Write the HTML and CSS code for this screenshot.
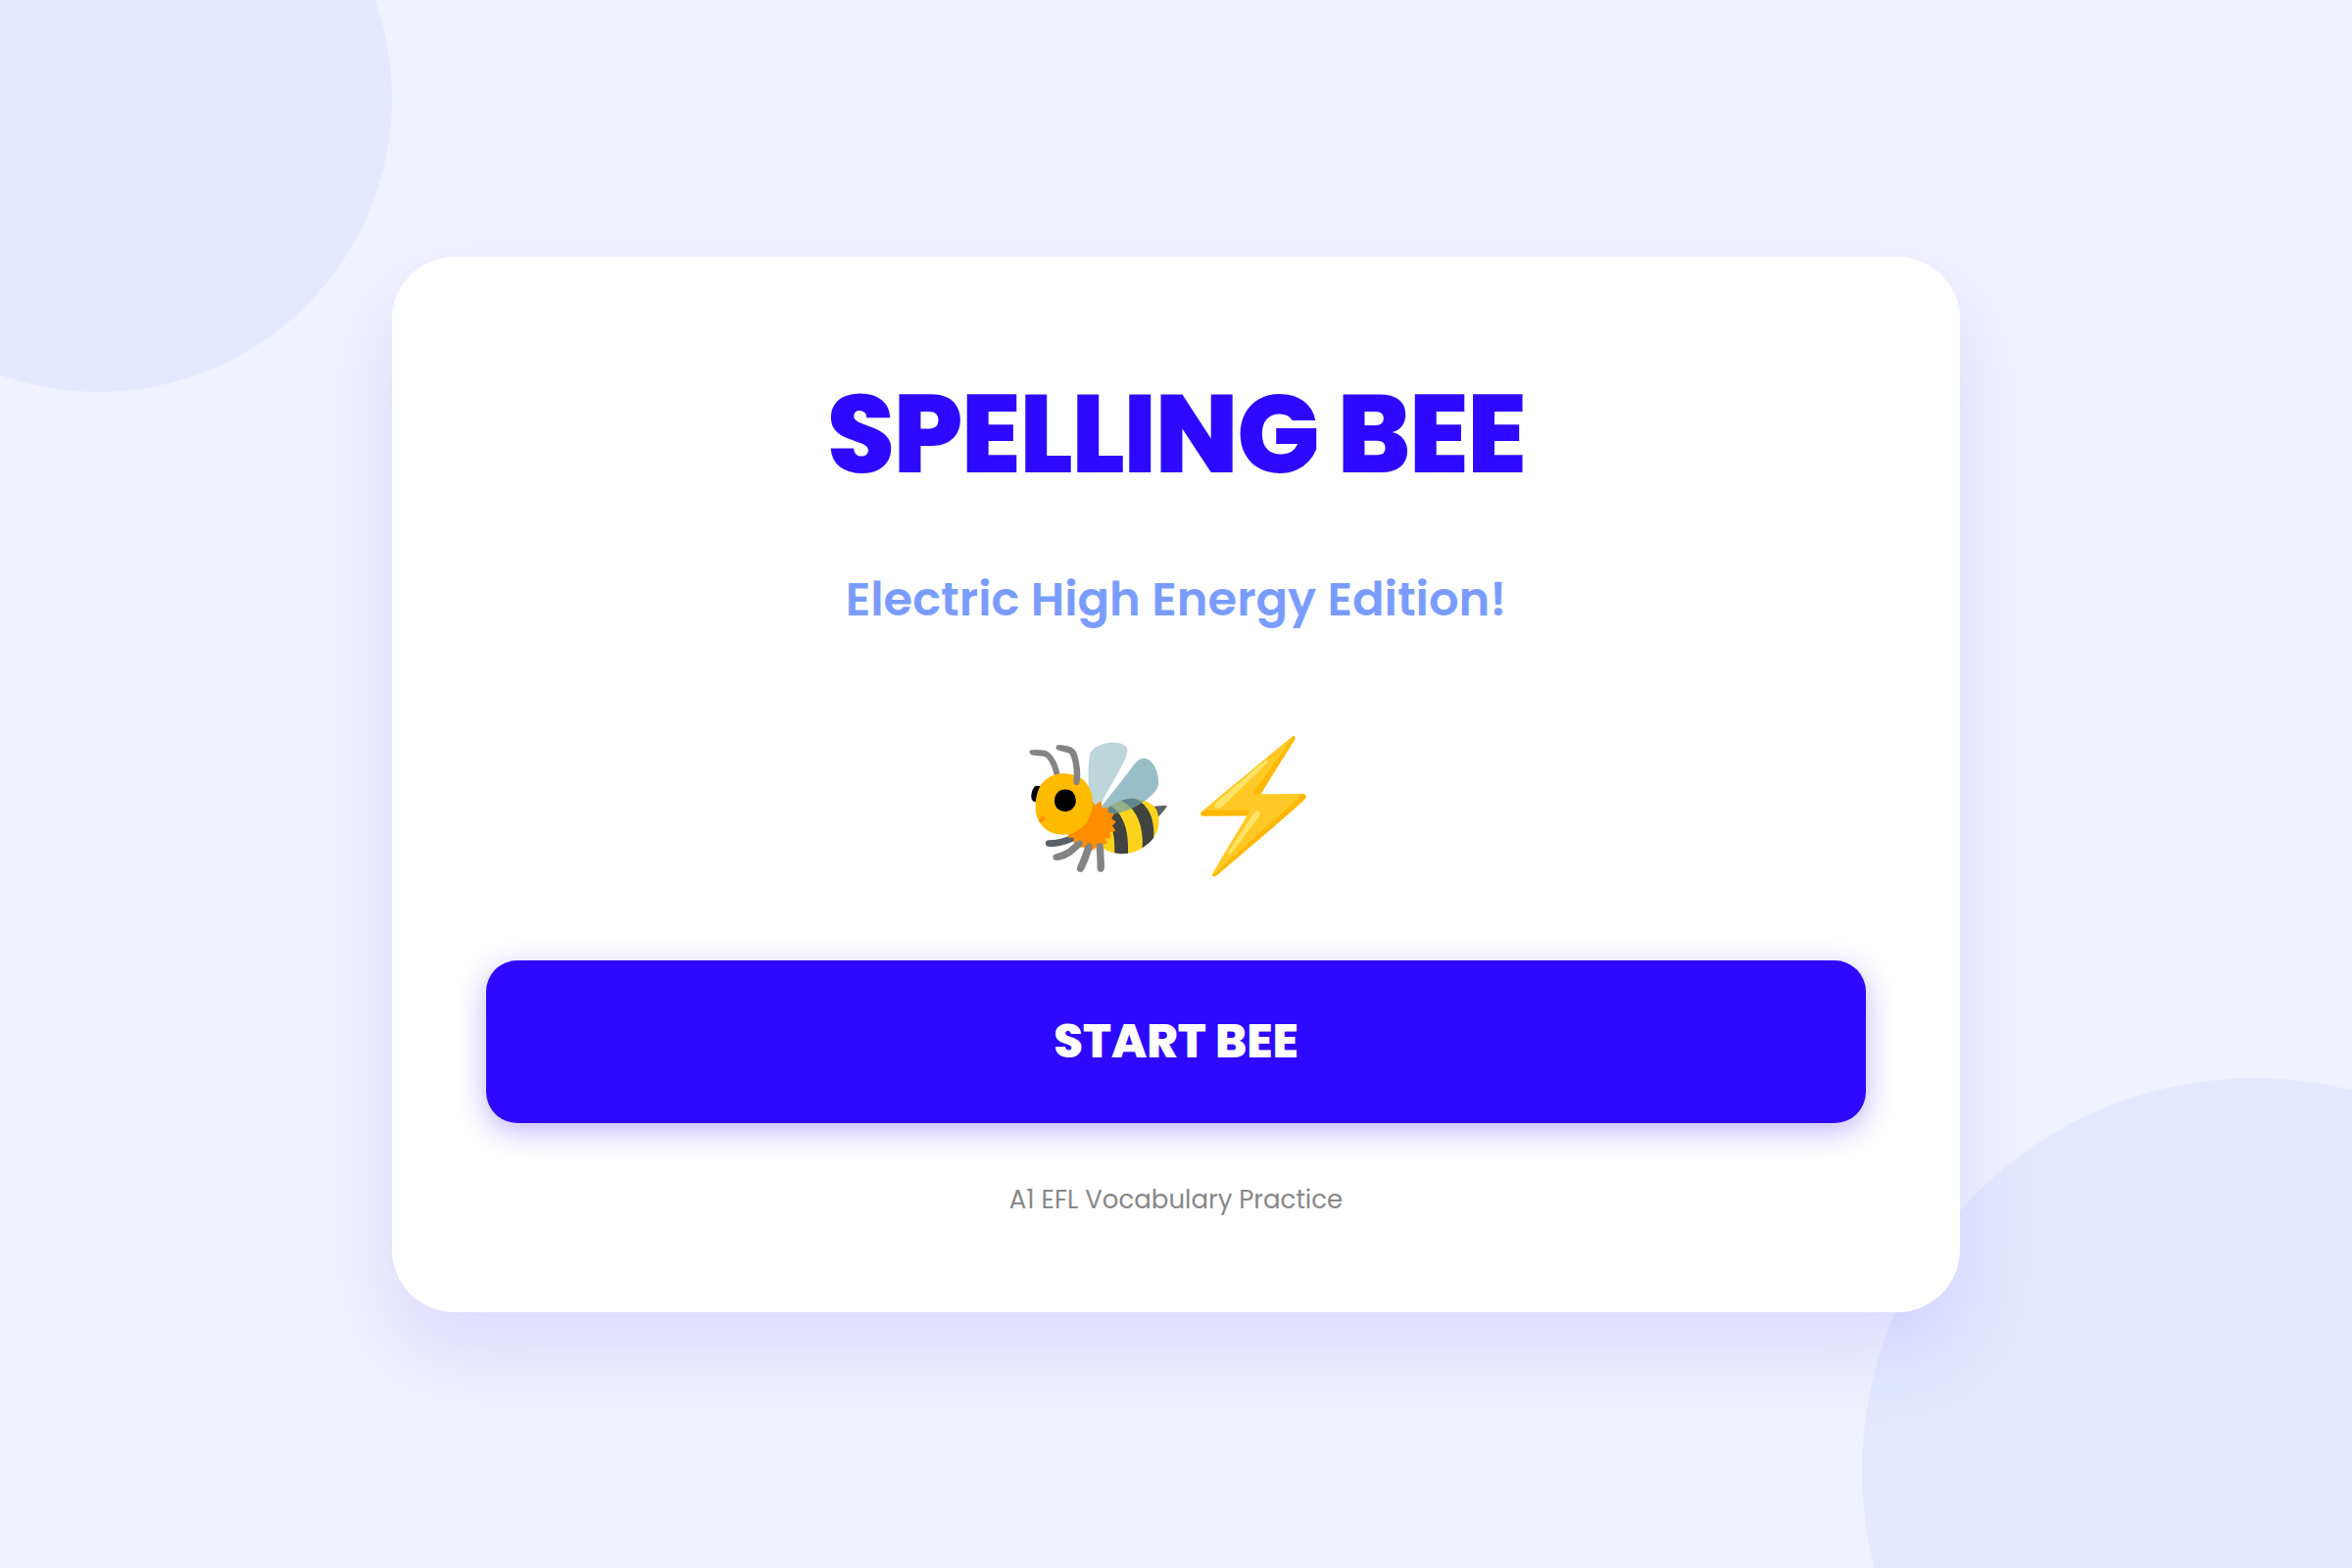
FILE: index.html
```html
<!DOCTYPE html>
<html lang="en">
<head>
    <meta charset="UTF-8">
    <meta name="viewport" content="width=device-width, initial-scale=1.0">
    <title>Spelling Bee</title>
    <link rel="stylesheet" href="styles.css">
</head>
<body>
    <div class="page">
        <div class="circle circle-top"></div>
        <div class="circle circle-bottom"></div>

        <main class="card">
            <h1>SPELLING BEE</h1>
            <p class="subtitle">Electric High Energy Edition!</p>
            <div class="emoji">🐝⚡</div>
            <button type="button" class="start-btn">START BEE</button>
            <p class="footnote">A1 EFL Vocabulary Practice</p>
        </main>
    </div>
</body>
</html>
```

FILE: styles.css
```css
* {
    box-sizing: border-box;
    margin: 0;
    padding: 0;
}

body {
    background-color: #f0f2ff;
    font-family: 'Poppins', 'Inter', sans-serif;
}

.page {
    position: relative;
    min-height: 100vh;
    display: flex;
    align-items: center;
    justify-content: center;
    overflow: hidden;
}

/* Background circles */
.circle {
    position: absolute;
    border-radius: 50%;
    background: #e4e9ff;
}

.circle-top {
    top: -200px;
    left: -200px;
    width: 600px;
    height: 600px;
}

.circle-bottom {
    right: -300px;
    bottom: -300px;
    width: 800px;
    height: 800px;
}

.card {
    position: relative;
    width: 90%;
    max-width: 1600px;
    padding: 96px;
    background: #fff;
    border-radius: 64px;
    box-shadow: 0 40px 80px rgba(45, 10, 255, 0.1);
    text-align: center;
}

h1 {
    margin-bottom: 48px;
    font-size: 112px;
    font-weight: 800;
    line-height: 170px;
    letter-spacing: -2px;
    color: #2d0aff;
}

.subtitle {
    margin-bottom: 78px;
    font-size: 48px;
    font-weight: 600;
    line-height: 72px;
    color: #7a9cff;
}

.emoji {
    margin-bottom: 62px;
    font-size: 128px;
    line-height: 192px;
}

.start-btn {
    display: block;
    width: 100%;
    padding: 48px;
    border: none;
    border-radius: 32px;
    background: #2d0aff;
    box-shadow: 0 8px 30px rgba(45, 10, 255, 0.3);
    color: #fff;
    font-family: inherit;
    font-size: 48px;
    font-weight: 800;
    line-height: 70px;
    cursor: pointer;
}

.footnote {
    margin-top: 60px;
    font-size: 26px;
    line-height: 37px;
    color: #888;
}
```
